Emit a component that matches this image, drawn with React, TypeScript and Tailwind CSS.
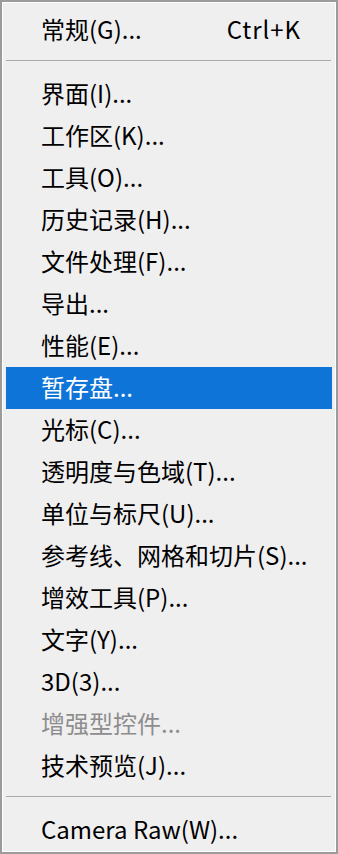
import React from 'react'

type Item = { label: string; shortcut?: string; disabled?: boolean; active?: boolean }

const mainItems: Item[] = [
    { label: '界面(I)...' },
    { label: '工作区(K)...' },
    { label: '工具(O)...' },
    { label: '历史记录(H)...' },
    { label: '文件处理(F)...' },
    { label: '导出...' },
    { label: '性能(E)...' },
    { label: '暂存盘...', active: true },
    { label: '光标(C)...' },
    { label: '透明度与色域(T)...' },
    { label: '单位与标尺(U)...' },
    { label: '参考线、网格和切片(S)...' },
    { label: '增效工具(P)...' },
    { label: '文字(Y)...' },
    { label: '3D(3)...' },
    { label: '增强型控件...', disabled: true },
    { label: '技术预览(J)...' },
]

const MenuRow = ({ item }: { item: Item }) => {
    const color = item.active ? 'bg-[#0f74d7] text-white' : item.disabled ? 'text-[#8d8d8d]' : 'text-black'
    return (
        <div className={`mx-[3px] h-[42px] flex items-center justify-between whitespace-nowrap pl-[35px] pr-[31px] pb-[2px] ${color}`}>
            <span>{item.label}</span>
            {item.shortcut && <span className="tracking-[0.04em]">{item.shortcut}</span>}
        </div>
    )
}

const Separator = () => (
    <div className="pt-[9px] pb-[12px] mx-[3px] mr-[4px]">
        <div className="h-px bg-[#a9a9a9]" />
    </div>
)

export default function App() {
    return (
        <div
            className="w-[338px] h-[854px] bg-[#f0eff0] border-2 border-[#9b9b9b] text-[24px] leading-none"
            style={{ fontFamily: '"Noto Sans CJK SC", "Microsoft YaHei", sans-serif' }}
        >
            <div className="h-full border border-white pt-[6px] flex flex-col">
                <MenuRow item={{ label: '常规(G)...', shortcut: 'Ctrl+K' }} />
                <Separator />
                {mainItems.map((item) => (
                    <MenuRow key={item.label} item={item} />
                ))}
                <Separator />
                <MenuRow item={{ label: 'Camera Raw(W)...' }} />
            </div>
        </div>
    )
}
